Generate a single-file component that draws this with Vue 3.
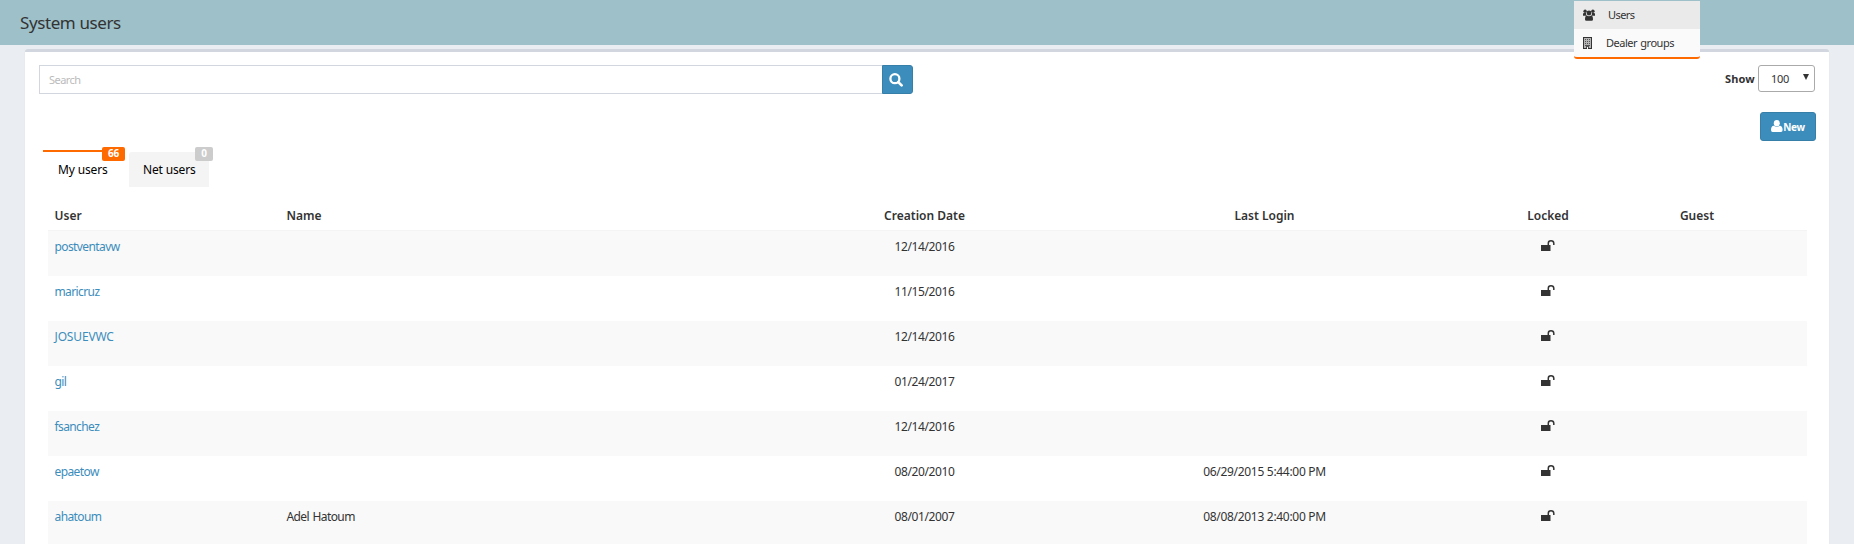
<script setup>
const rows = [
  { user: 'postventavw', name: '', created: '12/14/2016', login: '' },
  { user: 'maricruz', name: '', created: '11/15/2016', login: '' },
  { user: 'JOSUEVWC', name: '', created: '12/14/2016', login: '', caps: true },
  { user: 'gil', name: '', created: '01/24/2017', login: '' },
  { user: 'fsanchez', name: '', created: '12/14/2016', login: '' },
  { user: 'epaetow', name: '', created: '08/20/2010', login: '06/29/2015 5:44:00 PM' },
  { user: 'ahatoum', name: 'Adel Hatoum', created: '08/01/2007', login: '08/08/2013 2:40:00 PM' },
]
</script>

<template>
  <div class="page">
    <header class="topbar">
      <h1>System users</h1>
      <nav class="menu">
        <a class="menu-item active">
          <svg class="ico-users" width="12" height="12" viewBox="0 0 12 12">
            <circle cx="2.1" cy="2.3" r="1.7" />
            <circle cx="9.9" cy="2.3" r="1.7" />
            <path d="M0 6.8V5Q0 4 1 4h2Q3 6 3.8 6.8zM12 6.8V5q0-1-1-1H9q0 2-.8 2.8z" />
            <circle cx="6" cy="4" r="2.4" />
            <path d="M2 10.4Q2 6.6 3.9 6.6 6 8 8.1 6.6 10 6.6 10 10.4 10 11.8 8.6 11.8H3.4Q2 11.8 2 10.4z" />
          </svg>
          <span class="menu-users">Users</span>
        </a>
        <a class="menu-item">
          <svg class="ico-building" width="9" height="12" viewBox="0 0 9 12">
            <path d="M0 0h9v12H0z" />
            <path fill="#b5b5b5" d="M1 1h7v10H1z" />
            <path fill="#555" d="M2 2h1v1H2zM4 2h1v1H4zM6 2h1v1H6zM2 4h1v1H2zM4 4h1v1H4zM6 4h1v1H6zM2 6h1v1H2zM4 6h1v1H4zM6 6h1v1H6zM2 8h5v1H2zM3 9h3v2H3z" />
            <path fill="#fafafa" d="M4 10h1v2H4z" />
          </svg>
          <span class="menu-groups">Dealer groups</span>
        </a>
      </nav>
    </header>

    <main class="card">
      <div class="tools">
        <div class="search">
          <input type="text" placeholder="Search" />
          <button class="btn search-btn">
            <svg width="14" height="14" viewBox="0 0 14 14">
              <circle cx="5.9" cy="5.7" r="4.5" fill="none" stroke="#fff" stroke-width="2.3" />
              <path d="M9.3 9.1l3.3 3.3" stroke="#fff" stroke-width="2.7" stroke-linecap="round" />
            </svg>
          </button>
        </div>
        <div class="show">
          <b>Show</b>
          <span class="select"><span>100</span><i></i></span>
        </div>
      </div>

      <div class="actions">
        <button class="btn new-btn">
          <svg width="12" height="12" viewBox="0 0 12 12">
            <ellipse cx="5.8" cy="3.2" rx="3" ry="3.2" fill="#fff" />
            <path d="M0 10Q0 6 2.8 5.8 5.8 8 8.8 5.8 11.6 6 11.6 10 11.6 12 10 12H1.6Q0 12 0 10z" fill="#fff" />
          </svg>
          <span>New</span>
        </button>
      </div>

      <div class="tabs">
        <div class="tab current"><span>My users</span><em>66</em></div>
        <div class="tab"><span>Net users</span><em>0</em></div>
      </div>

      <div class="table">
        <div class="row head">
          <span>User</span><span>Name</span><span class="c">Creation Date</span>
          <span class="c">Last Login</span><span class="c">Locked</span><span class="c">Guest</span>
        </div>
        <div v-for="r in rows" :key="r.user" class="row item">
          <a :class="{ caps: r.caps }">{{ r.user }}</a>
          <span>{{ r.name }}</span>
          <span class="c date">{{ r.created }}</span>
          <span class="c login">{{ r.login }}</span>
          <span class="c">
            <svg class="lock" width="14" height="12" viewBox="0 0 14 12">
              <path d="M0 5h9.5v6H0z" fill="#333" />
              <path d="M7.3 5V3.2Q7.3.8 10 .8t2.8 2.4V5" fill="none" stroke="#333" stroke-width="1.5" />
            </svg>
          </span>
          <span></span>
        </div>
      </div>
    </main>
  </div>
</template>

<style>
body { background: #eaeef3; overflow: hidden; }
</style>

<style scoped>
* { box-sizing: border-box; }
.page {
  height: 544px;
  overflow: hidden;
  background: #eaeef3;
  color: #333;
  font-family: "Noto Sans", "Open Sans", sans-serif;
  font-size: 12px;
  line-height: 17px;
}
.topbar { position: relative; height: 45px; background: #9dc0c9; }
h1 {
  margin: 0;
  padding: 11px 0 0 20px;
  font-size: 17px;
  line-height: 24px;
  font-weight: 400;
  letter-spacing: -0.4px;
}
.menu {
  position: absolute;
  z-index: 2;
  left: 1574px;
  top: 1px;
  width: 126px;
  height: 58px;
  background: #fafafa;
  border-bottom: 2px solid #ff6a00;
  border-radius: 0 0 3px 3px;
  font-size: 11px;
}
.menu-item { display: flex; align-items: center; height: 28px; padding-left: 9px; fill: #333; }
.menu-item span { padding-bottom: 2px; }
.menu-item.active { background: #eaeaea; }
.menu-users { margin-left: 13px; letter-spacing: -0.55px; }
.menu-groups { margin-left: 14px; letter-spacing: -0.5px; word-spacing: 1px; }
.card {
  width: 1804px;
  height: 520px;
  margin: 4px 0 0 25px;
  padding: 13px 13px 0 14px;
  background: #fff;
  border-top: 3px solid #d2d6de;
  border-radius: 3px 3px 0 0;
  box-shadow: 0 1px 1px rgba(0, 0, 0, 0.15);
}
.tools { display: flex; justify-content: space-between; height: 29px; }
.search { display: flex; }
input {
  width: 843px;
  height: 29px;
  padding: 0 9px;
  border: 1px solid #d2d6de;
  border-right: 0;
  outline: 0;
  font: 11px "Noto Sans", sans-serif;
  letter-spacing: -0.55px;
}
input::placeholder { color: #bbb; opacity: 1; }
.btn {
  display: flex;
  align-items: center;
  justify-content: center;
  padding: 0;
  border: 1px solid #367fa9;
  background: #3c8dbc;
  color: #fff;
}
.search-btn { width: 31px; height: 29px; border-radius: 0 3px 3px 0; }
.search-btn svg { margin-right: 3px; }
.show { display: flex; align-items: flex-start; margin-right: 1px; font-size: 11px; }
.show b { margin: 5px 3px 0 0; letter-spacing: 0.2px; }
.select {
  display: flex;
  align-items: center;
  width: 57px;
  height: 27px;
  padding-left: 12px;
  border: 1px solid #aaa;
  border-radius: 3px;
}
.select span { width: 20px; letter-spacing: -0.3px; }
.select i {
  margin: -3px 0 0 12px;
  border: 3px solid transparent;
  border-top: 6px solid #333;
  border-bottom: 0;
}
.actions { display: flex; justify-content: flex-end; padding-top: 18px; }
.new-btn { width: 56px; height: 29px; border-radius: 3px; font: bold 10px "Noto Sans", sans-serif; }
.new-btn svg { margin-bottom: 2px; }
.new-btn span { letter-spacing: -0.3px; }
.tabs { display: flex; gap: 4px; margin: 9px 0 0 4px; color: #000; }
.tab {
  position: relative;
  width: 80px;
  height: 35px;
  margin-top: 2px;
  padding: 9px 0 0 14px;
  background: #f4f4f4;
  border-radius: 3px 3px 0 0;
  white-space: nowrap;
  letter-spacing: -0.15px;
}
.tab.current { width: 82px; height: 37px; margin-top: 0; padding-left: 15px; background: #fff; border-top: 2px solid #ff6a00; border-radius: 0; }
.tab em {
  position: absolute;
  left: 66px;
  top: -5px;
  width: 18px;
  height: 14px;
  border-radius: 2px;
  background: #ccc;
  color: #fff;
  font: bold 10px/13px "Noto Sans", sans-serif;
  text-align: center;
}
.tab.current em { left: 59px; width: 23px; background: #ff6a00; }
.table { width: 1759px; margin: 11px 0 0 9px; }
.row { display: grid; grid-template-columns: 232px 474px 341px 339px 228px 70px; }
.row > * { padding-left: 6.5px; white-space: nowrap; }
.row > .c { padding: 0; text-align: center; }
.head { height: 33px; padding-top: 9px; border-bottom: 1px solid #f4f4f4; font-weight: 600; }
.item { height: 45px; padding-top: 7px; letter-spacing: -0.6px; word-spacing: 1px; }
.item:nth-child(even) { background: #f9f9f9; }
.item a { color: #3c8dbc; }
.item .caps { letter-spacing: -0.15px; }
.date { letter-spacing: -0.4px; }
.login { letter-spacing: -0.3px; word-spacing: 0; }
.lock { display: block; margin: 2px 0 0 107px; }
</style>
